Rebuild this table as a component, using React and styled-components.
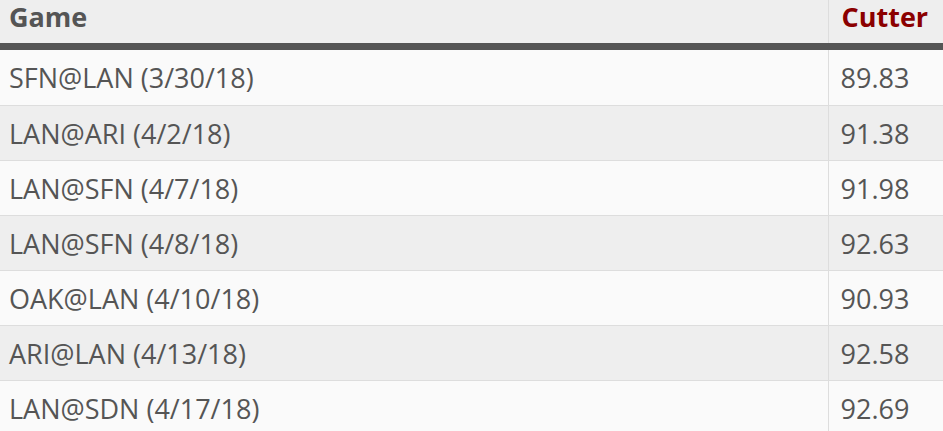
import React from 'react';
import styled, { createGlobalStyle } from 'styled-components';

const GlobalStyle = createGlobalStyle`
    body {
        margin: 0;
        background: #fafafa;
        font-family: "Open Sans", "Liberation Sans", sans-serif;
    }
`;

const Table = styled.table`
    width: 943px;
    border-collapse: collapse;
    table-layout: fixed;
    color: #555;
    font-size: 27px;
`;

const HeadCell = styled.th`
    height: 43px;
    padding: 0 0 0 ${props => props.$pad}px;
    background: #eee;
    text-align: left;
    font-weight: 700;
    vertical-align: top;
    line-height: 33px;
    color: ${props => props.$accent ? '#8b0000' : '#555'};
    border-bottom: 7px solid #555;
    border-left: ${props => props.$divider ? '1px solid #ddd' : 'none'};
`;

const Row = styled.tr`
    background: ${props => props.$odd ? '#eee' : '#fafafa'};
    border-bottom: 1px solid #ddd;
`;

const Cell = styled.td`
    height: ${props => props.$first ? 55 : 54}px;
    padding: 0 0 0 ${props => props.$pad}px;
    border-left: ${props => props.$divider ? '1px solid #ddd' : 'none'};
`;

const games = [
    ['SFN@LAN (3/30/18)', '89.83'],
    ['LAN@ARI (4/2/18)', '91.38'],
    ['LAN@SFN (4/7/18)', '91.98'],
    ['LAN@SFN (4/8/18)', '92.63'],
    ['OAK@LAN (4/10/18)', '90.93'],
    ['ARI@LAN (4/13/18)', '92.58'],
    ['LAN@SDN (4/17/18)', '92.69'],
];

export default function App() {
    return (
        <>
            <GlobalStyle />
            <Table>
                <colgroup>
                    <col style={{ width: 828 }} />
                    <col />
                </colgroup>
                <thead>
                    <tr>
                        <HeadCell $pad={9}>Game</HeadCell>
                        <HeadCell $pad={13} $divider $accent>Cutter</HeadCell>
                    </tr>
                </thead>
                <tbody>
                    {games.map(([game, velo], i) => (
                        <Row key={game} $odd={i % 2 === 1}>
                            <Cell $pad={9} $first={i === 0}>{game}</Cell>
                            <Cell $pad={12} $first={i === 0} $divider>{velo}</Cell>
                        </Row>
                    ))}
                </tbody>
            </Table>
        </>
    );
}
